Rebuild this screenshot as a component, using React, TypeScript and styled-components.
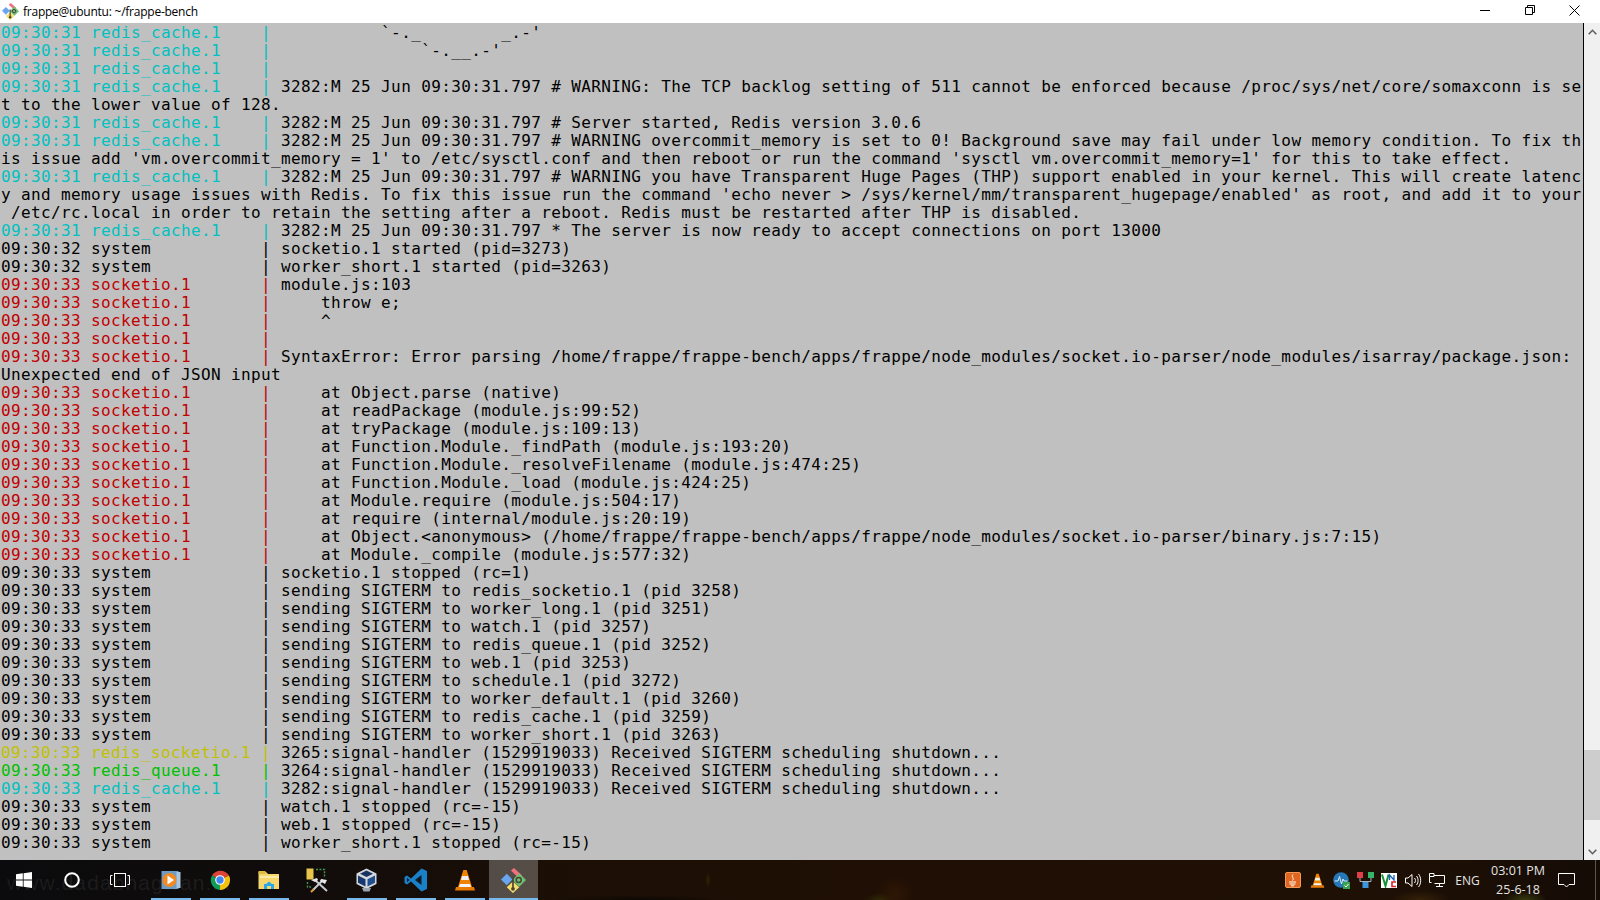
import styled, { createGlobalStyle } from 'styled-components';

type Tone = 'cyan' | 'red' | 'yellow' | 'green' | 'plain';

const toneColors: Record<Tone, string> = {
    cyan: '#00c0c0',
    red: '#c00000',
    yellow: '#c0c000',
    green: '#00c000',
    plain: '#000000',
};

const GlobalStyle = createGlobalStyle`
    html, body {
        margin: 0;
        padding: 0;
        height: 100%;
        overflow: hidden;
        background: #000;
    }
    #root {
        height: 100%;
    }
`;

const Screen = styled.div`
    display: flex;
    flex-direction: column;
    width: 1600px;
    height: 900px;
`;

const TitleBar = styled.header`
    display: flex;
    align-items: center;
    height: 23px;
    flex: none;
    background: #fff;
    padding: 0 3px 0 2px;
`;

const TitleText = styled.span`
    font-family: "Open Sans", "Noto Sans", sans-serif;
    font-size: 12px;
    letter-spacing: -0.24px;
    color: #000;
    margin-left: 4px;
    flex: 1;
`;

const WindowButton = styled.div`
    width: 45px;
    height: 23px;
    padding-bottom: 3px;
    box-sizing: border-box;
    display: flex;
    align-items: center;
    justify-content: center;
`;

const Body = styled.main`
    flex: 1;
    display: flex;
    min-height: 0;
`;

const Log = styled.div`
    flex: 1;
    background: #c0c0c0;
    padding: 1px 0 0 1px;
    overflow: hidden;
    font-family: "DejaVu Sans Mono", "Liberation Mono", monospace;
    font-size: 16px;
    letter-spacing: 0.37px;
    line-height: 18px;
    white-space: pre;
    color: #000;
`;

const Row = styled.div`
    height: 18px;
`;

const Prefix = styled.span<{ $tone: Tone }>`
    color: ${(props) => toneColors[props.$tone]};
`;

const ScrollTrack = styled.aside`
    width: 16px;
    margin-left: 1px;
    background: #f0f0f0;
    display: flex;
    flex-direction: column;
    align-items: center;
`;

const ScrollArrow = styled.div`
    height: 17px;
    width: 16px;
    display: flex;
    align-items: center;
    justify-content: center;
`;

const ThumbLane = styled.div`
    flex: 1;
    width: 100%;
    display: flex;
    flex-direction: column;
    justify-content: flex-end;
    padding-bottom: 23px;
`;

const ScrollThumb = styled.div`
    height: 70px;
    background: #cdcdcd;
`;

const Taskbar = styled.footer`
    position: relative;
    display: flex;
    height: 40px;
    flex: none;
    color: #fff;
    background:
        radial-gradient(ellipse 22px 9px at 1525px 40px, rgba(58, 62, 14, 0.9), transparent),
        radial-gradient(ellipse 30px 10px at 1420px 40px, rgba(58, 38, 8, 0.8), transparent),
        radial-gradient(ellipse 20px 18px at 895px 34px, rgba(50, 24, 6, 0.8), transparent),
        radial-gradient(ellipse 16px 7px at 880px 40px, rgba(48, 44, 6, 0.9), transparent),
        radial-gradient(ellipse 3px 8px at 708px 20px, rgba(44, 38, 4, 0.9), transparent),
        radial-gradient(ellipse 90px 5px at 640px 40px, rgba(10, 8, 4, 0.9), transparent),
        linear-gradient(90deg, #0b0b0d 0%, #100c0b 18%, #1c0f05 36%, #200f04 60%, #1f1005 85%, #150c06 100%);
`;

const Watermark = styled.div`
    position: absolute;
    left: 7px;
    top: 11px;
    font-family: "Liberation Sans", sans-serif;
    font-size: 21px;
    letter-spacing: 1.1px;
    color: rgba(255, 255, 255, 0.08);
`;

const SystemButton = styled.div`
    position: relative;
    width: 48px;
    height: 40px;
    display: flex;
    align-items: center;
    justify-content: center;
`;

const AppGroup = styled.div`
    position: relative;
    display: flex;
    margin-left: 2px;
`;

const AppButton = styled.div<{ $running?: boolean; $active?: boolean }>`
    position: relative;
    width: 49px;
    height: 40px;
    display: flex;
    align-items: center;
    justify-content: center;
    background: ${(props) => (props.$active ? 'rgba(255, 255, 255, 0.26)' : 'transparent')};
    &::after {
        content: '';
        display: ${(props) => (props.$running ? 'block' : 'none')};
        position: absolute;
        bottom: 0;
        left: ${(props) => (props.$active ? '0' : '5px')};
        right: ${(props) => (props.$active ? '0' : '4px')};
        height: 2px;
        background: #76b9ed;
    }
`;

const Tray = styled.div`
    position: relative;
    display: flex;
    margin-left: auto;
    align-items: center;
    height: 40px;
`;

const TrayIcon = styled.div`
    width: 24px;
    height: 40px;
    display: flex;
    align-items: center;
    justify-content: center;
`;

const Lang = styled.div`
    width: 37px;
    text-align: center;
    font-family: "Open Sans", "Noto Sans", sans-serif;
    font-size: 12px;
    color: #e4e4e4;
`;

const Clock = styled.div`
    width: 64px;
    text-align: center;
    font-family: "Open Sans", "Noto Sans", sans-serif;
    font-size: 12.5px;
    line-height: 19px;
    color: #e4e4e4;
`;

const NoticeButton = styled.div`
    width: 32px;
    display: flex;
    justify-content: center;
`;

const ShowDesktop = styled.div`
    width: 4px;
    height: 40px;
    margin-left: 13px;
    border-left: 1px solid #5a5650;
`;

const rows: [Tone | null, string, string][] = [
    ['cyan', 'redis_cache.1', "          `-._        _.-'"],
    ['cyan', 'redis_cache.1', "              `-.__.-'"],
    ['cyan', 'redis_cache.1', ''],
    ['cyan', 'redis_cache.1', '3282:M 25 Jun 09:30:31.797 # WARNING: The TCP backlog setting of 511 cannot be enforced because /proc/sys/net/core/somaxconn is se'],
    [null, '', 't to the lower value of 128.'],
    ['cyan', 'redis_cache.1', '3282:M 25 Jun 09:30:31.797 # Server started, Redis version 3.0.6'],
    ['cyan', 'redis_cache.1', '3282:M 25 Jun 09:30:31.797 # WARNING overcommit_memory is set to 0! Background save may fail under low memory condition. To fix th'],
    [null, '', "is issue add 'vm.overcommit_memory = 1' to /etc/sysctl.conf and then reboot or run the command 'sysctl vm.overcommit_memory=1' for this to take effect."],
    ['cyan', 'redis_cache.1', '3282:M 25 Jun 09:30:31.797 # WARNING you have Transparent Huge Pages (THP) support enabled in your kernel. This will create latenc'],
    [null, '', "y and memory usage issues with Redis. To fix this issue run the command 'echo never > /sys/kernel/mm/transparent_hugepage/enabled' as root, and add it to your"],
    [null, '', ' /etc/rc.local in order to retain the setting after a reboot. Redis must be restarted after THP is disabled.'],
    ['cyan', 'redis_cache.1', '3282:M 25 Jun 09:30:31.797 * The server is now ready to accept connections on port 13000'],
    ['plain', 'system', 'socketio.1 started (pid=3273)'],
    ['plain', 'system', 'worker_short.1 started (pid=3263)'],
    ['red', 'socketio.1', 'module.js:103'],
    ['red', 'socketio.1', '    throw e;'],
    ['red', 'socketio.1', '    ^'],
    ['red', 'socketio.1', ''],
    ['red', 'socketio.1', 'SyntaxError: Error parsing /home/frappe/frappe-bench/apps/frappe/node_modules/socket.io-parser/node_modules/isarray/package.json:'],
    [null, '', 'Unexpected end of JSON input'],
    ['red', 'socketio.1', '    at Object.parse (native)'],
    ['red', 'socketio.1', '    at readPackage (module.js:99:52)'],
    ['red', 'socketio.1', '    at tryPackage (module.js:109:13)'],
    ['red', 'socketio.1', '    at Function.Module._findPath (module.js:193:20)'],
    ['red', 'socketio.1', '    at Function.Module._resolveFilename (module.js:474:25)'],
    ['red', 'socketio.1', '    at Function.Module._load (module.js:424:25)'],
    ['red', 'socketio.1', '    at Module.require (module.js:504:17)'],
    ['red', 'socketio.1', '    at require (internal/module.js:20:19)'],
    ['red', 'socketio.1', '    at Object.<anonymous> (/home/frappe/frappe-bench/apps/frappe/node_modules/socket.io-parser/binary.js:7:15)'],
    ['red', 'socketio.1', '    at Module._compile (module.js:577:32)'],
    ['plain', 'system', 'socketio.1 stopped (rc=1)'],
    ['plain', 'system', 'sending SIGTERM to redis_socketio.1 (pid 3258)'],
    ['plain', 'system', 'sending SIGTERM to worker_long.1 (pid 3251)'],
    ['plain', 'system', 'sending SIGTERM to watch.1 (pid 3257)'],
    ['plain', 'system', 'sending SIGTERM to redis_queue.1 (pid 3252)'],
    ['plain', 'system', 'sending SIGTERM to web.1 (pid 3253)'],
    ['plain', 'system', 'sending SIGTERM to schedule.1 (pid 3272)'],
    ['plain', 'system', 'sending SIGTERM to worker_default.1 (pid 3260)'],
    ['plain', 'system', 'sending SIGTERM to redis_cache.1 (pid 3259)'],
    ['plain', 'system', 'sending SIGTERM to worker_short.1 (pid 3263)'],
    ['yellow', 'redis_socketio.1', '3265:signal-handler (1529919033) Received SIGTERM scheduling shutdown...'],
    ['green', 'redis_queue.1', '3264:signal-handler (1529919033) Received SIGTERM scheduling shutdown...'],
    ['cyan', 'redis_cache.1', '3282:signal-handler (1529919033) Received SIGTERM scheduling shutdown...'],
    ['plain', 'system', 'watch.1 stopped (rc=-15)'],
    ['plain', 'system', 'web.1 stopped (rc=-15)'],
    ['plain', 'system', 'worker_short.1 stopped (rc=-15)'],
];

const stampFor = (index: number) => {
    if (index < 12) return '09:30:31';
    if (index < 14) return '09:30:32';
    return '09:30:33';
};

const GitDiamond = ({ size }: { size: number }) => (
    <svg width={size} height={size} viewBox="0 0 24 24">
        <path d="M5.5 5.5 L11 11 L5.5 16.5 L0 11 Z" fill="#6aa5f0" />
        <path d="M9.5 2.5 L12.5 0 L20 7 L17.5 10 Z" fill="#f0707f" />
        <path d="M17.5 5 L24 11.5 L17.5 18 L11 11.5 Z" fill="#6cc070" />
        <path d="M11.5 13 L17.5 18.5 L11.5 24 L5.5 18.5 Z" fill="#f5df6a" />
        <path d="M11.5 9 V19" stroke="#4a4038" strokeWidth="1.6" fill="none" />
        <circle cx="11.5" cy="20" r="1.8" fill="#4a4038" />
        <circle cx="17" cy="11.5" r="2.4" stroke="#4a4038" strokeWidth="1.4" fill="none" />
    </svg>
);

const WindowsLogo = () => (
    <svg width="16" height="16" viewBox="0 0 16 16" fill="#fff">
        <path d="M0 2.3 L6.8 1.3 V7.5 H0 Z M7.6 1.2 L16 0 V7.5 H7.6 Z M0 8.4 H6.8 V14.7 L0 13.7 Z M7.6 8.4 H16 V16 L7.6 14.8 Z" />
    </svg>
);

const CortanaRing = () => (
    <svg width="16" height="16" viewBox="0 0 16 16">
        <circle cx="8" cy="8" r="6.8" fill="none" stroke="#fff" strokeWidth="2" />
    </svg>
);

const TaskViewIcon = () => (
    <svg width="20" height="14" viewBox="0 0 20 14" fill="none" stroke="#fff" strokeWidth="1">
        <rect x="4.5" y="0.5" width="11" height="13" />
        <path d="M2.5 2.5 H0.5 V11.5 H2.5 M17.5 2.5 H19.5 V11.5 H17.5" />
    </svg>
);

const MediaPlayerIcon = () => (
    <svg width="20" height="20" viewBox="0 0 20 20">
        <rect x="0.5" y="1" width="17" height="18" fill="#6f9cc4" />
        <rect x="15.5" y="2" width="4" height="16" fill="#a9c6de" />
        <circle cx="8.5" cy="10" r="7" fill="#f08a24" />
        <path d="M6.5 5.5 L13 10 L6.5 14.5 Z" fill="#fff" />
    </svg>
);

const ChromeIcon = () => (
    <svg width="22" height="22" viewBox="0 0 48 48">
        <path d="M24 24 L6.5 14 A22 22 0 0 1 43.5 14 Z" fill="#db4437" />
        <path d="M24 24 L43.5 14 A22 22 0 0 1 24 46 Z" fill="#f4c20d" />
        <path d="M24 24 L24 46 A22 22 0 0 1 6.5 14 Z" fill="#0f9d58" />
        <circle cx="24" cy="24" r="10.5" fill="#fff" />
        <circle cx="24" cy="24" r="8" fill="#4285f4" />
    </svg>
);

const ExplorerIcon = () => (
    <svg width="22" height="20" viewBox="0 0 22 20">
        <path d="M0.5 2 H8 L10 4 H21 V19 H0.5 Z" fill="#f5d76e" />
        <rect x="0.5" y="1" width="7" height="3" fill="#e0b93f" />
        <path d="M2 6 H21 V8 H2 Z" fill="#fbeaa8" />
        <path d="M6 19 V14 H8 L11 11.5 L14 14 H16 V19 H13 V16 H9 V19 Z" fill="#29a9e8" />
    </svg>
);

const ToolsIcon = () => (
    <svg width="24" height="25" viewBox="0 0 24 25">
        <rect x="0.5" y="0.5" width="7" height="11" fill="#e9c54a" />
        <path d="M10 1.5 H18.5 V9 M1.5 14 V19 H5" fill="none" stroke="#3f9a50" strokeWidth="1.4" strokeDasharray="2 1.4" />
        <path d="M7 22 L17 12 M9 12 L21 23" stroke="#c9ccd0" strokeWidth="2" />
        <path d="M5 12 L11 10 L12 12 L9 14 Z M15 11 L21 12 L19 16 L14 13 Z" fill="#e6e6e6" />
        <path d="M5 24 L8 21" stroke="#e0a040" strokeWidth="2" />
    </svg>
);

const VirtualBoxIcon = () => (
    <svg width="21" height="24" viewBox="0 0 21 24">
        <path d="M10.5 0.5 L20.5 5.5 V16 L10.5 21 L0.5 16 V5.5 Z" fill="#d5d9de" />
        <path d="M10.5 2.5 L17 5.8 L10.5 9 L4 5.8 Z" fill="#17335f" />
        <path d="M2 7.5 L9.5 11.2 V18.5 L2 14.8 Z" fill="#17386c" />
        <path d="M19 7.5 L11.5 11.2 V18.5 L19 14.8 Z" fill="#1f4f8f" />
        <path d="M6 20 H15 L13.5 23.5 H7.5 Z" fill="#9aa4b0" />
    </svg>
);

const VsCodeIcon = () => (
    <svg width="24" height="24" viewBox="0 0 24 24">
        <path d="M17.5 0.5 L23 3 V21 L17.5 23.5 L7 13.5 L3 16.5 L0.5 15 V9 L3 7.5 L7 10.5 Z" fill="#1a80c8" />
        <path d="M17.5 7 L11 12 L17.5 17 Z M3 9.8 V14.2 L5.5 12 Z" fill="#0f1a22" />
    </svg>
);

const VlcCone = ({ size }: { size: number }) => (
    <svg width={size} height={size} viewBox="0 0 20 22">
        <path d="M8.3 1 H11.7 L17 18 H3 Z" fill="#f08400" />
        <path d="M7 7 H13 L14 11 H6 Z" fill="#f0f0f0" />
        <path d="M1 18 H19 L20 21.5 H0 Z" fill="#e87a00" />
        <path d="M5 15 H15 L16 18 H4 Z" fill="#f4f4f4" />
    </svg>
);

const JavaTrayIcon = () => (
    <svg width="16" height="16" viewBox="0 0 16 16">
        <rect x="0.5" y="0.5" width="15" height="15" rx="1.5" fill="#e0661f" stroke="#f29a55" />
        <path d="M8 2.5 C5.5 5 10 6 7.5 8.5 M4 10 H11 M4.5 12 H10.5 M6 13.8 H9" stroke="#fff" strokeWidth="1" fill="none" />
    </svg>
);

const MonitorTrayIcon = () => (
    <svg width="17" height="17" viewBox="0 0 17 17">
        <circle cx="8" cy="8" r="7.8" fill="#2577b5" />
        <path d="M1.5 9 H5 L6.5 4.5 L8.5 12 L10 7 L11 9 H14.5" stroke="#d9ecf9" strokeWidth="1" fill="none" />
        <rect x="10" y="10" width="7" height="7" fill="#38a34a" />
        <path d="M11.5 13.5 L13 15 L15.5 12" stroke="#fff" strokeWidth="1" fill="none" />
    </svg>
);

const NodesTrayIcon = () => (
    <svg width="17" height="16" viewBox="0 0 17 16">
        <path d="M3 6 V9.5 H14 V6 M8.5 9.5 V11" stroke="#aab4bc" fill="none" />
        <rect x="0" y="0" width="6" height="6" fill="#e0404a" />
        <rect x="11" y="0" width="6" height="6" fill="#35b56a" />
        <rect x="5.5" y="10" width="6" height="6" fill="#3b96dc" />
    </svg>
);

const VncTrayIcon = () => (
    <svg width="16" height="15" viewBox="0 0 16 15">
        <rect width="16" height="15" fill="#fff" />
        <path d="M1 1.5 L4.5 13 L7.5 1.5" stroke="#1d8f36" strokeWidth="2" fill="none" />
        <path d="M8.5 7 V2 L13 7 V2" stroke="#1d5fc0" strokeWidth="1.3" fill="none" />
        <path d="M15 9 H11 V13.5 H15" stroke="#d8232a" strokeWidth="1.6" fill="none" />
    </svg>
);

const VolumeTrayIcon = () => (
    <svg width="17" height="15" viewBox="0 0 17 15" fill="none" stroke="#fff" strokeWidth="1">
        <path d="M0.5 5 H3 L7 1.5 V13.5 L3 10 H0.5 Z" />
        <path d="M9.5 5 C10.8 6.5 10.8 8.5 9.5 10 M11.5 3 C13.6 5.5 13.6 9.5 11.5 12 M13.5 1 C16.4 4.5 16.4 10.5 13.5 14" />
    </svg>
);

const NetworkTrayIcon = () => (
    <svg width="16" height="14" viewBox="0 0 16 14" fill="none" stroke="#fff" strokeWidth="1">
        <path d="M0.5 0.5 H5 V3.5 H0.5 Z M0.5 3.5 V9.5 H2.5 M5 2.5 H15.5 V10.5 H5.5 M10.5 10.5 V13 M7 13.5 H14" />
    </svg>
);

const NoticeIcon = () => (
    <svg width="17" height="15" viewBox="0 0 17 15" fill="none" stroke="#fff" strokeWidth="1">
        <path d="M0.5 0.5 H16.5 V11.5 H11 L8.5 14 L6 11.5 H0.5 Z" />
    </svg>
);

const apps = [
    { key: 'wmp', icon: <MediaPlayerIcon />, running: true },
    { key: 'chrome', icon: <ChromeIcon />, running: true },
    { key: 'explorer', icon: <ExplorerIcon />, running: true },
    { key: 'tools', icon: <ToolsIcon />, running: false },
    { key: 'vbox', icon: <VirtualBoxIcon />, running: true },
    { key: 'vscode', icon: <VsCodeIcon />, running: true },
    { key: 'vlc', icon: <VlcCone size={22} />, running: true },
    { key: 'git', icon: <GitDiamond size={25} />, running: true, active: true },
];

const trayIcons = [
    <JavaTrayIcon key="java" />,
    <VlcCone key="vlc" size={15} />,
    <MonitorTrayIcon key="monitor" />,
    <NodesTrayIcon key="nodes" />,
    <VncTrayIcon key="vnc" />,
    <VolumeTrayIcon key="volume" />,
    <NetworkTrayIcon key="network" />,
];

export default function App() {
    return (
        <Screen>
            <GlobalStyle />
            <TitleBar>
                <GitDiamond size={17} />
                <TitleText>frappe@ubuntu: ~/frappe-bench</TitleText>
                <WindowButton>
                    <svg width="10" height="10" viewBox="0 0 10 10"><path d="M0 5.5 H10" stroke="#000" /></svg>
                </WindowButton>
                <WindowButton>
                    <svg width="10" height="10" viewBox="0 0 10 10" fill="none" stroke="#000"><path d="M0.5 2.5 H7.5 V9.5 H0.5 Z M2.5 2.5 V0.5 H9.5 V7.5 H7.5" /></svg>
                </WindowButton>
                <WindowButton>
                    <svg width="11" height="11" viewBox="0 0 11 11"><path d="M0.5 0.5 L10.5 10.5 M10.5 0.5 L0.5 10.5" stroke="#000" /></svg>
                </WindowButton>
            </TitleBar>
            <Body>
                <Log>
                    {rows.map(([tone, name, text], index) => (
                        <Row key={index}>
                            {tone && (
                                <Prefix $tone={tone}>{`${stampFor(index)} ${name.padEnd(17)}| `}</Prefix>
                            )}
                            {text}
                        </Row>
                    ))}
                </Log>
                <ScrollTrack>
                    <ScrollArrow>
                        <svg width="9" height="6" viewBox="0 0 9 6" fill="none" stroke="#606060" strokeWidth="1.6"><path d="M0.7 5.3 L4.5 1.3 L8.3 5.3" /></svg>
                    </ScrollArrow>
                    <ThumbLane>
                        <ScrollThumb />
                    </ThumbLane>
                    <ScrollArrow>
                        <svg width="9" height="6" viewBox="0 0 9 6" fill="none" stroke="#606060" strokeWidth="1.6"><path d="M0.7 0.7 L4.5 4.7 L8.3 0.7" /></svg>
                    </ScrollArrow>
                </ScrollTrack>
            </Body>
            <Taskbar>
                <Watermark>www.dadabhagwan.in</Watermark>
                <SystemButton><WindowsLogo /></SystemButton>
                <SystemButton><CortanaRing /></SystemButton>
                <SystemButton><TaskViewIcon /></SystemButton>
                <AppGroup>
                    {apps.map((app) => (
                        <AppButton key={app.key} $running={app.running} $active={app.active}>
                            {app.icon}
                        </AppButton>
                    ))}
                </AppGroup>
                <Tray>
                    {trayIcons.map((icon) => (
                        <TrayIcon key={icon.key}>{icon}</TrayIcon>
                    ))}
                    <Lang>ENG</Lang>
                    <Clock>
                        03:01 PM
                        <br />
                        25-6-18
                    </Clock>
                    <NoticeButton><NoticeIcon /></NoticeButton>
                    <ShowDesktop />
                </Tray>
            </Taskbar>
        </Screen>
    );
}
